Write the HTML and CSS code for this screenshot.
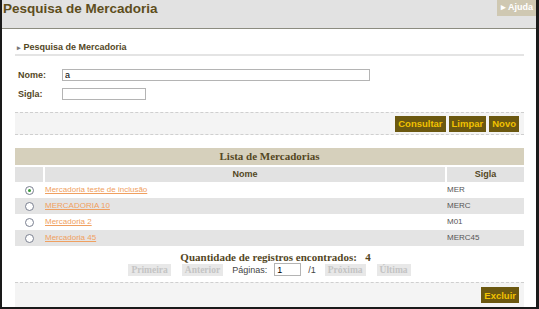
FILE: index.html
```html
<!DOCTYPE html>
<html lang="pt">
<head>
  <meta charset="UTF-8" />
  <title>Pesquisa de Mercadoria</title>
  <link rel="stylesheet" href="styles.css">
</head>
<body>
  <div class="frame">
    <!-- Title bar -->
    <div class="titlebar">
      <h1>Pesquisa de Mercadoria</h1>
      <a class="help" href="#">&#9656; Ajuda</a>
    </div>

    <div class="content">
      <h3 class="section"><span class="arrow">&#9656;</span> Pesquisa de Mercadoria</h3>

      <!-- Search form -->
      <div class="form">
        <div class="form-row">
          <label>Nome:</label>
          <input type="text" class="input-long" value="a">
        </div>
        <div class="form-row">
          <label>Sigla:</label>
          <input type="text" class="input-short">
        </div>
      </div>

      <div class="buttonbar">
        <button class="btn">Consultar</button>
        <button class="btn">Limpar</button>
        <button class="btn">Novo</button>
      </div>

      <!-- Results -->
      <div class="list">
        <div class="list-title">Lista de Mercadorias</div>
        <div class="list-head">
          <div class="cell-radio"></div>
          <div class="cell-name">Nome</div>
          <div class="cell-code">Sigla</div>
        </div>
        <div class="list-row">
          <div class="cell-radio"><span class="radio checked"></span></div>
          <div class="cell-name"><a href="#">Mercadoria teste de inclusão</a></div>
          <div class="cell-code">MER</div>
        </div>
        <div class="list-row alt">
          <div class="cell-radio"><span class="radio"></span></div>
          <div class="cell-name"><a href="#">MERCADORIA 10</a></div>
          <div class="cell-code">MERC</div>
        </div>
        <div class="list-row">
          <div class="cell-radio"><span class="radio"></span></div>
          <div class="cell-name"><a href="#">Mercadoria 2</a></div>
          <div class="cell-code">M01</div>
        </div>
        <div class="list-row alt">
          <div class="cell-radio"><span class="radio"></span></div>
          <div class="cell-name"><a href="#">Mercadoria 45</a></div>
          <div class="cell-code">MERC45</div>
        </div>
      </div>

      <div class="count">Quantidade de registros encontrados: &nbsp;&nbsp;4</div>

      <!-- Paging -->
      <div class="paging">
        <span class="page-btn">Primeira</span>
        <span class="page-btn">Anterior</span>
        <span class="page-label">Páginas:</span>
        <input type="text" class="page-input" value="1">
        <span class="page-label">/1</span>
        <span class="page-btn">Próxima</span>
        <span class="page-btn">Última</span>
      </div>

      <div class="buttonbar bottom">
        <button class="btn">Excluir</button>
      </div>
    </div>
  </div>
</body>
</html>
```

FILE: styles.css
```css
* {
  box-sizing: border-box;
}
body {
  margin: 0;
  font-family: "Liberation Sans", Arial, sans-serif;
  background: #fff;
}
.frame {
  width: 539px;
  height: 309px;
  border-left: 2px solid #1a1a1a;
  border-right: 3px solid #1a1a1a;
  border-bottom: 2px solid #1a1a1a;
  overflow: hidden;
}
.titlebar {
  height: 29px;
  background: #e2e2e2;
  border-bottom: 1px solid #8c8c80;
  display: flex;
  justify-content: space-between;
  align-items: flex-start;
}
.titlebar h1 {
  margin: 0;
  padding: 1px 0 0 1px;
  font-size: 13.5px;
  color: #5e4e1c;
  font-weight: bold;
}
.help {
  background: #cfc8b2;
  color: #fff;
  font-size: 9px;
  font-weight: bold;
  text-decoration: none;
  padding: 2px 3px 4px 4px;
}
.content {
  padding: 0 12px 0 13px;
}
.section {
  margin: 13px 0 0 0;
  padding: 0 0 2px 2px;
  font-size: 9px;
  color: #54471f;
  border-bottom: 2px solid #e4e4e4;
}
.section .arrow {
  font-size: 7px;
  color: #777;
}
.form {
  padding: 9px 0 0 3px;
}
.form-row {
  display: flex;
  align-items: center;
  height: 19px;
}
.form-row label {
  width: 44px;
  font-size: 9px;
  font-weight: bold;
  color: #54471f;
}
.form-row input {
  height: 12px;
  border: 1px solid #b4b4b4;
  font-size: 9px;
  font-family: "Liberation Sans", Arial, sans-serif;
  padding: 0 2px;
}
.input-long {
  width: 308px;
}
.input-short {
  width: 84px;
}
.buttonbar {
  margin-top: 9px;
  height: 23px;
  background: #f4f4f4;
  border-top: 1px dashed #cfcfcf;
  border-bottom: 1px dashed #cfcfcf;
  display: flex;
  justify-content: flex-end;
  align-items: center;
  gap: 3px;
  padding-right: 5px;
}
.btn {
  background: #6b5810;
  color: #f2c200;
  border: none;
  font-family: "Liberation Sans", Arial, sans-serif;
  font-weight: bold;
  font-size: 9.5px;
  height: 16px;
  padding: 0 3px;
  cursor: pointer;
}
.list {
  margin-top: 13px;
}
.list-title {
  height: 17px;
  background: #d6d0bc;
  text-align: center;
  font-family: "Liberation Serif", "Times New Roman", serif;
  font-weight: bold;
  font-size: 11px;
  color: #54471f;
  line-height: 17px;
}
.list-head,
.list-row {
  display: flex;
  gap: 2px;
  height: 16px;
  align-items: stretch;
}
.list-head {
  margin-top: 2px;
  height: 15px;
  font-size: 9px;
  font-weight: bold;
  color: #54471f;
}
.list-head > div {
  background: #e2e2e2;
  text-align: center;
  line-height: 15px;
}
.cell-radio {
  width: 28px;
  display: flex;
  align-items: center;
  justify-content: center;
}
.cell-name {
  flex: 1;
}
.cell-code {
  width: 77px;
}
.list-row {
  font-size: 8px;
  line-height: 16px;
}
.list-row.alt {
  background: #e4e4e4;
}
.list-row .cell-name a {
  color: #f0a060;
}
.list-row .cell-code {
  color: #555;
}
.radio {
  width: 9px;
  height: 9px;
  border: 1px solid #7a8090;
  border-radius: 50%;
  background: #fff;
  position: relative;
}
.radio.checked::after {
  content: "";
  position: absolute;
  left: 2px;
  top: 2px;
  width: 3px;
  height: 3px;
  border-radius: 50%;
  background: #3a9a3a;
}
.count {
  margin-top: 5px;
  padding-left: 12px;
  text-align: center;
  font-family: "Liberation Serif", "Times New Roman", serif;
  font-weight: bold;
  font-size: 11px;
  color: #54471f;
}
.paging {
  display: flex;
  justify-content: center;
  align-items: center;
  gap: 7px;
  margin-top: 0;
}
.page-btn {
  background: #e8e8e8;
  color: #c4c4c4;
  font-family: "Liberation Serif", "Times New Roman", serif;
  font-weight: bold;
  font-size: 9.5px;
  padding: 1px 3px;
  margin: 0 2px;
}
.page-label {
  font-size: 9px;
  color: #444;
}
.page-input {
  width: 27px;
  height: 13px;
  border: 1px solid #b4b4b4;
  font-size: 9px;
  padding: 0 2px;
}
.buttonbar.bottom {
  margin-top: 6px;
  height: 25px;
  border-bottom: none;
}
```
